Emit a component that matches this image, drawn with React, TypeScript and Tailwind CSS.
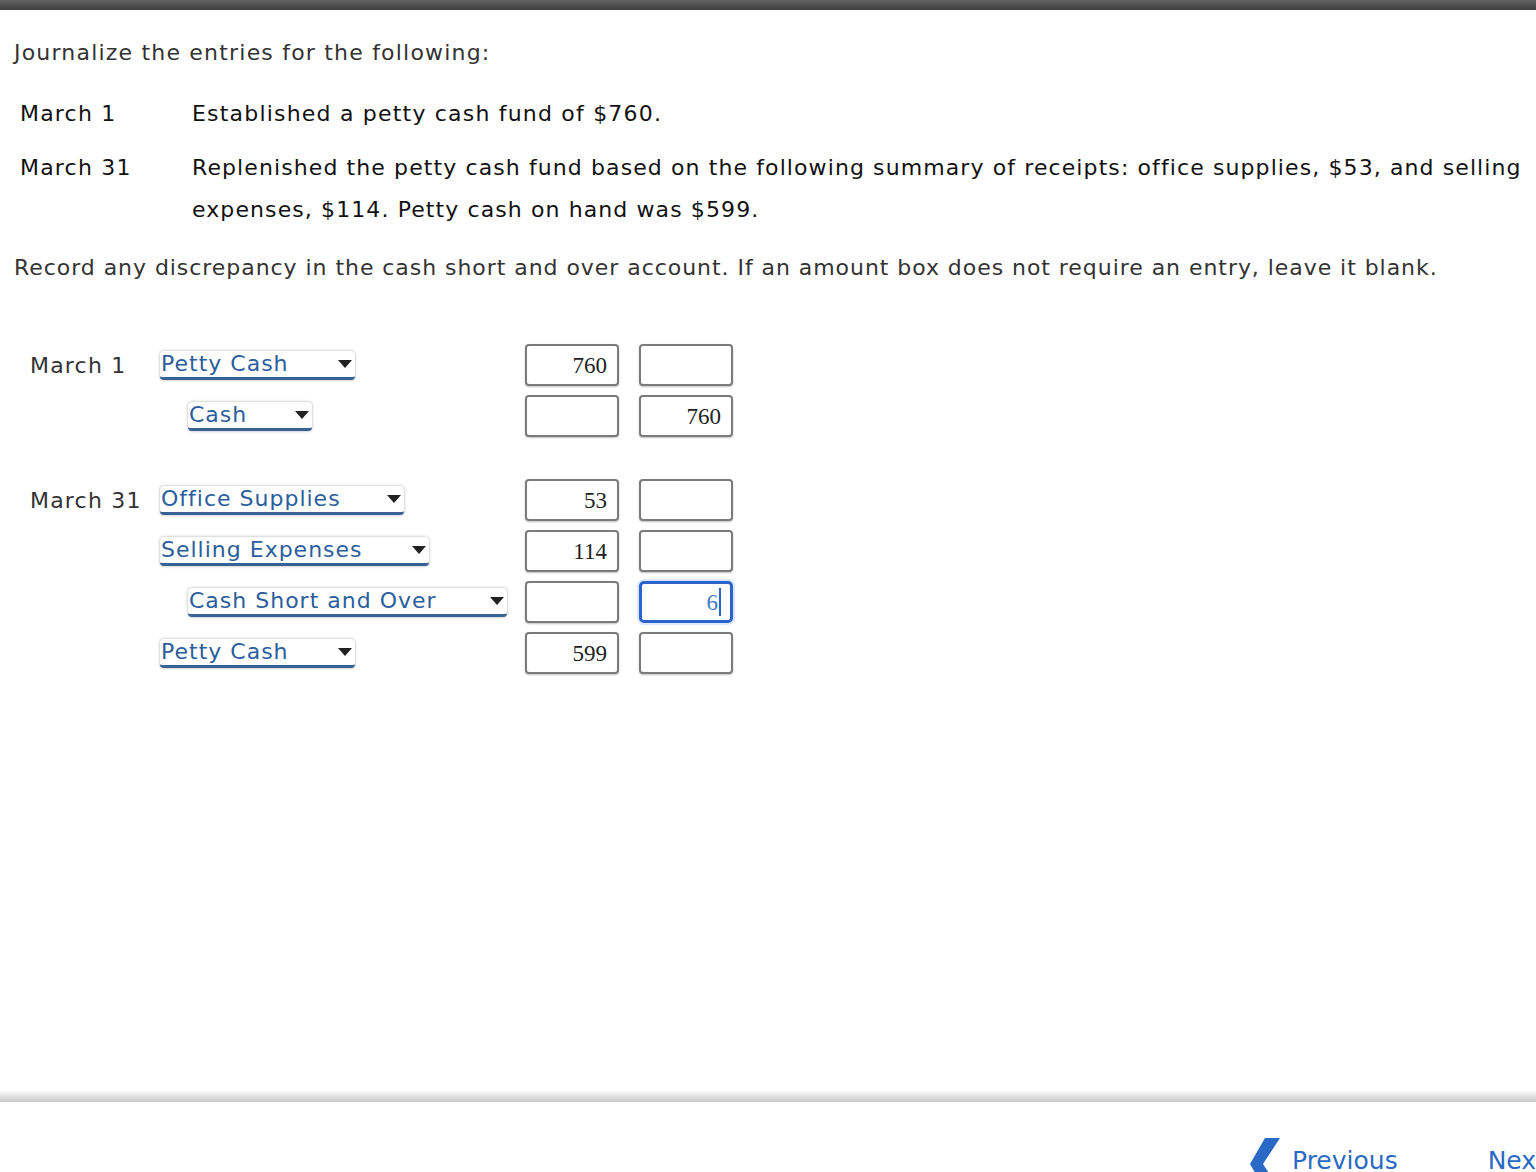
import React from "react";

const sans = "font-['DejaVu_Sans','Verdana',sans-serif]";
const serif = "font-['Liberation_Serif','Times_New_Roman',serif]";

type Entry = {
  date?: string;
  account: string;
  width: string;
  indent: boolean;
  debit: string;
  credit: string;
  focused?: boolean;
};

function AccountSelect({ label, width }: { label: string; width: string }) {
  return (
    <div
      className={`relative flex h-[29px] items-center rounded-[4px] bg-white shadow-[0_0_3px_rgba(0,0,0,0.35)] border-b-[3px] border-[#386195] ${width}`}
    >
      <span className="whitespace-nowrap pl-[1px] text-[22px] leading-none tracking-[1px] text-[#2b5e9c]">
        {label}
      </span>
      <svg className="absolute right-[3px] top-[9px]" width="14" height="9" viewBox="0 0 14 9">
        <path d="M0 0 L14 0 L7 8 Z" fill="#222" />
      </svg>
    </div>
  );
}

function AmountBox({ value, focused }: { value: string; focused?: boolean }) {
  return (
    <div
      className={
        focused
          ? `flex h-[42px] w-[94px] items-center justify-end rounded-[5px] border-[3px] border-[#2b63cc] bg-white pr-[9px] shadow-[0_0_0_2px_#dce8fa] ${serif}`
          : `flex h-[42px] w-[94px] items-center justify-end rounded-[4px] border-2 border-[#7b7b7b] bg-white pr-[10px] shadow-[0_1px_2px_rgba(0,0,0,0.25)] ${serif}`
      }
    >
      <span className={`text-[23px] leading-none ${focused ? "text-[#3f7cc8]" : "text-[#222]"}`}>{value}</span>
      {focused && <span className="ml-[1px] h-[28px] w-[2px] bg-[#2b63cc]" />}
    </div>
  );
}

function JournalRow({ entry }: { entry: Entry }) {
  return (
    <div className="flex h-[42px] items-center">
      <div className="w-[130px] shrink-0 whitespace-nowrap pl-[30px] text-[22px] tracking-[1.2px] text-[#333]">
        {entry.date}
      </div>
      <div className={`flex w-[395px] shrink-0 ${entry.indent ? "pl-[58px]" : "pl-[30px]"}`}>
        <AccountSelect label={entry.account} width={entry.width} />
      </div>
      <div className="flex gap-[20px]">
        <AmountBox value={entry.debit} />
        <AmountBox value={entry.credit} focused={entry.focused} />
      </div>
    </div>
  );
}

const march1: Entry[] = [
  { date: "March 1", account: "Petty Cash", width: "w-[195px]", indent: false, debit: "760", credit: "" },
  { account: "Cash", width: "w-[124px]", indent: true, debit: "", credit: "760" },
];

const march31: Entry[] = [
  { date: "March 31", account: "Office Supplies", width: "w-[244px]", indent: false, debit: "53", credit: "" },
  { account: "Selling Expenses", width: "w-[269px]", indent: false, debit: "114", credit: "" },
  { account: "Cash Short and Over", width: "w-[319px]", indent: true, debit: "", credit: "6", focused: true },
  { account: "Petty Cash", width: "w-[195px]", indent: false, debit: "599", credit: "" },
];

export default function App() {
  return (
    <div className={`flex h-[1172px] flex-col overflow-hidden bg-white tracking-[1.2px] ${sans}`}>
      <div className="h-[10px] shrink-0 bg-gradient-to-b from-[#666] to-[#3d3d3d]" />

      <main className="flex-1 pl-[14px]">
        <p className="mt-[30px] text-[22px] leading-[26px] text-[#333]">Journalize the entries for the following:</p>

        <div className="mt-[27px] pl-[6px] text-[22px] text-[#111]">
          <div className="flex leading-[42px]">
            <div className="w-[172px] shrink-0">March 1</div>
            <div>Established a petty cash fund of $760.</div>
          </div>
          <div className="mt-[12px] flex leading-[42px]">
            <div className="w-[172px] shrink-0">March 31</div>
            <div className="whitespace-nowrap tracking-[1.1px]">
              Replenished the petty cash fund based on the following summary of receipts: office supplies, $53, and
              selling
              <br />
              expenses, $114. Petty cash on hand was $599.
            </div>
          </div>
        </div>

        <p className="mt-[24px] whitespace-nowrap text-[22px] leading-[26px] tracking-[0.95px] text-[#333]">
          Record any discrepancy in the cash short and over account. If an amount box does not require an entry, leave
          it blank.
        </p>

        <div className="-ml-[14px] mt-[63px] flex flex-col gap-[9px] tracking-normal">
          {march1.map((e, i) => (
            <JournalRow key={i} entry={e} />
          ))}
        </div>

        <div className="-ml-[14px] mt-[42px] flex flex-col gap-[9px] tracking-normal">
          {march31.map((e, i) => (
            <JournalRow key={i} entry={e} />
          ))}
        </div>
      </main>

      <footer className="h-[82px] shrink-0 tracking-normal">
        <div className="h-[12px] bg-gradient-to-b from-white to-[#c9c9c9]" />
        <div className="flex items-start pl-[1250px] pt-[36px]">
          <svg width="30" height="52" viewBox="0 0 30 52" className="shrink-0">
            <path d="M15 0 L30 0 L13 26 L30 52 L15 52 L0 26 Z" fill="#2a6ac6" />
          </svg>
          <span className="ml-[12px] mt-[10px] whitespace-nowrap text-[25px] leading-none text-[#2a6ac6]">Previous</span>
          <span className="ml-[90px] mt-[10px] whitespace-nowrap text-[25px] leading-none text-[#2a6ac6]">Next</span>
        </div>
      </footer>
    </div>
  );
}
